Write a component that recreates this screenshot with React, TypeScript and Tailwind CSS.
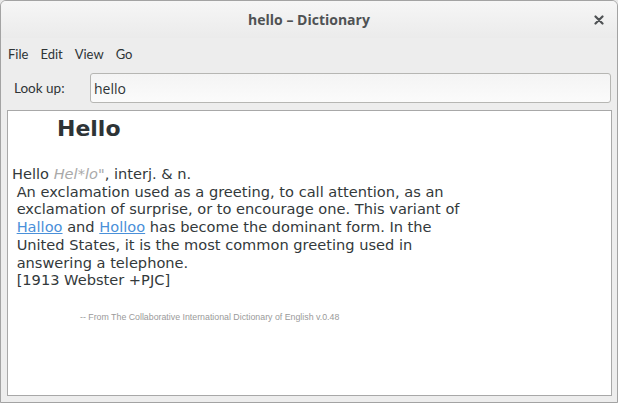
export default function App() {
  const ui = { fontFamily: '"Open Sans", "Noto Sans", sans-serif' };
  const label = { fontFamily: 'Lato, "Open Sans", sans-serif' };
  const body = { fontFamily: '"DejaVu Sans", sans-serif' };

  return (
    <div className="w-[618px] h-[403px] bg-[#e8e8e8]">
      <div className="w-full h-full flex flex-col border border-[#a3a3a3] rounded-t-[6px] bg-[#ededed] overflow-hidden">
        {/* title bar */}
        <div className="relative h-[37px] shrink-0 flex items-center justify-center bg-gradient-to-b from-[#f6f6f6] to-[#ebebeb]" style={ui}>
          <span className="text-[14px] font-bold text-[#4f5254] leading-none pt-[1px]">hello – Dictionary</span>
          <svg className="absolute right-[13px] top-[14px]" width="10" height="10" viewBox="0 0 10 10">
            <path d="M1.5 1.5 L8.5 8.5 M8.5 1.5 L1.5 8.5" stroke="#4f5254" strokeWidth="2.2" strokeLinecap="round" />
          </svg>
        </div>

        {/* menu */}
        <div className="h-[32px] shrink-0 flex items-center gap-[12px] pl-[7px] pt-[1px] text-[13px] text-[#2e3436]" style={label}>
          <span>File</span>
          <span>Edit</span>
          <span>View</span>
          <span>Go</span>
        </div>

        {/* look up */}
        <div className="flex items-center pt-[3px] pl-[13px] pr-[6px] text-[13.5px] text-[#2e3436]" style={label}>
          <span className="w-[76px] pt-[1px]">Look up:</span>
          <div className="flex-1 h-[30px] flex items-center pl-[3px] pt-[1px] text-[14px] rounded-[3px] border border-[#b6b6b3] bg-gradient-to-b from-[#f4f4f4] to-[#fbfbfb]" style={ui}>
            hello
          </div>
        </div>

        {/* definition pane */}
        <div className="flex-1 mt-[7px] mb-[6px] ml-[6px] mr-[5px] bg-white border border-[#a8a8a8] pl-[4px] text-[#2e3436]" style={body}>
          <div className="pl-[45px] pt-[4px] text-[22px] font-bold leading-[28px] text-[#2e3436]">Hello</div>
          <div className="mt-[22px] text-[14.6px] leading-[17.7px] whitespace-pre text-[#33393b]">
            <div>
              Hello <span className="italic text-[#a9a9a9]">Hel*lo"</span>, interj. &amp; n.
            </div>
            <div> An exclamation used as a greeting, to call attention, as an</div>
            <div> exclamation of surprise, or to encourage one. This variant of</div>
            <div>
              {' '}
              <span className="text-[#4a90d9] underline">Halloo</span> and{' '}
              <span className="text-[#4a90d9] underline">Holloo</span> has become the dominant form. In the
            </div>
            <div> United States, it is the most common greeting used in</div>
            <div> answering a telephone.</div>
            <div> [1913 Webster +PJC]</div>
          </div>
          <div className="mt-[22px] pl-[68px] text-[8.8px] text-[#9a9a9a]" style={{ fontFamily: '"Liberation Sans", sans-serif' }}>
            -- From The Collaborative International Dictionary of English v.0.48
          </div>
        </div>
      </div>
    </div>
  );
}
